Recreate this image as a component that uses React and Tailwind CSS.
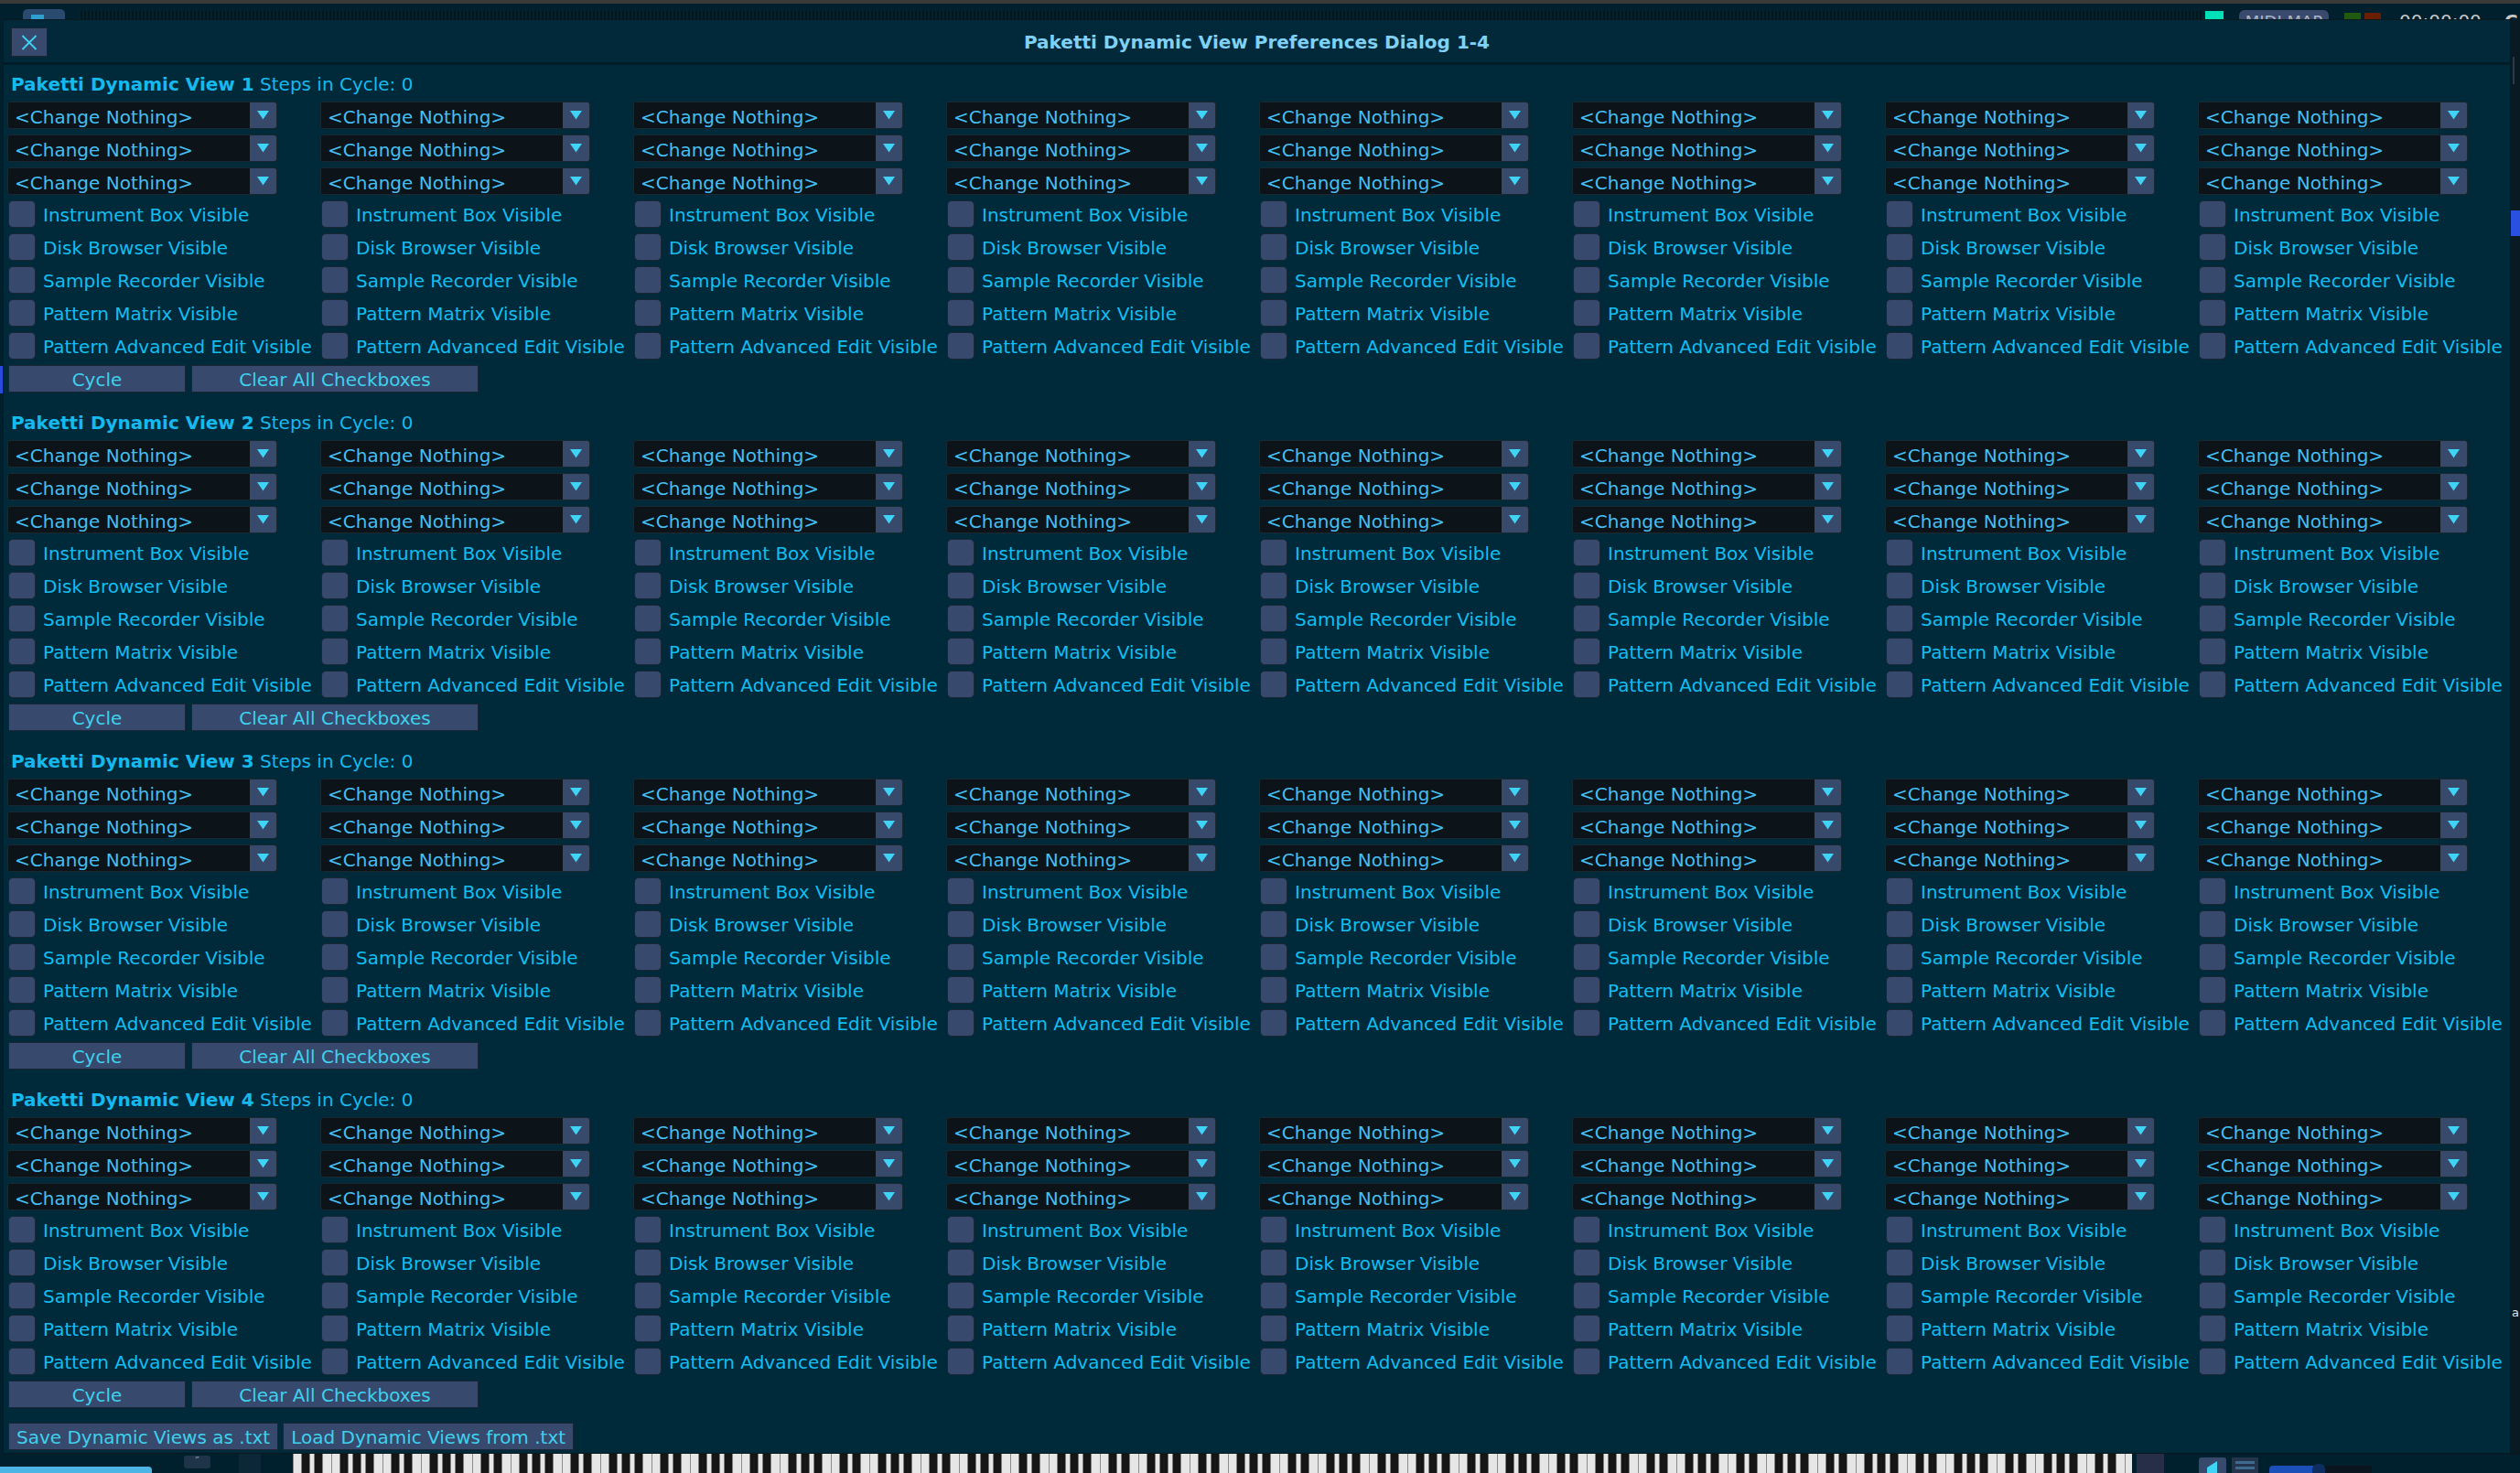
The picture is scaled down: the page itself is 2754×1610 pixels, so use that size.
import React from "react";

const LABELS = [
  "Instrument Box Visible",
  "Disk Browser Visible",
  "Sample Recorder Visible",
  "Pattern Matrix Visible",
  "Pattern Advanced Edit Visible",
];

function Dropdown() {
  return (
    <div className="flex h-[30px] w-[295px] overflow-hidden rounded-[3px] border border-[#1a2830] bg-[#0c1419]">
      <div className="flex-1 whitespace-nowrap pl-[7px] pt-[2px] text-[20px] leading-[28px] text-[#45bff2]">
        &lt;Change Nothing&gt;
      </div>
      <div className="flex w-[29px] items-center justify-center bg-[#384a6c]">
        <svg width="13" height="10" viewBox="0 0 13 10">
          <path d="M0 0H13L6.5 9.5Z" fill="#3fd3f6" />
        </svg>
      </div>
    </div>
  );
}

function CheckRow({ label }) {
  return (
    <div className="flex h-[30px] items-start">
      <div className="ml-[1px] h-[30px] w-[30px] shrink-0 rounded-[5px] border border-[#1b2636] bg-[#37496c]" />
      <span className="ml-[8px] whitespace-nowrap pt-[1px] text-[20px] leading-[30px] text-[#12bef0]">
        {label}
      </span>
    </div>
  );
}

function Btn({ children, className }) {
  return (
    <div
      className={
        "h-[30px] whitespace-nowrap border border-[#1b2636] bg-[#37496c] pt-[1px] text-center text-[20px] leading-[28px] text-[#3dd1ec] " +
        className
      }
    >
      {children}
    </div>
  );
}

function Section({ n }) {
  const cols = [0, 1, 2, 3, 4, 5, 6, 7];
  return (
    <div className="flex flex-col gap-[6px]">
      <div className="h-[30px] whitespace-nowrap pl-[4px] pt-[2px] text-[20px] leading-[30px] text-[#16b9ee]">
        <span className="font-bold">Paketti Dynamic View {n}</span>
        <span> Steps in Cycle: 0</span>
      </div>
      <div className="flex">
        {cols.map((c) => (
          <div key={c} className="flex w-[342px] shrink-0 flex-col gap-[6px]">
            <Dropdown />
            <Dropdown />
            <Dropdown />
            {LABELS.map((l) => (
              <CheckRow key={l} label={l} />
            ))}
          </div>
        ))}
      </div>
      <div className="flex gap-[6px] pl-[1px]">
        <Btn className="w-[194px]">Cycle</Btn>
        <Btn className="w-[314px]">Clear All Checkboxes</Btn>
      </div>
    </div>
  );
}

function Piano() {
  return (
    <svg width="2010" height="21" viewBox="0 0 2010 21">
      <defs>
        <pattern id="oct" width="98" height="21" patternUnits="userSpaceOnUse">
          <rect x="0" y="0" width="98" height="21" fill="#e6e6e6" />
          {[0, 14, 28, 42, 56, 70, 84].map((x) => (
            <rect key={x} x={x} y="0" width="1" height="21" fill="#8a8a8a" />
          ))}
          {[9.5, 23.5, 51.5, 65.5, 79.5].map((x) => (
            <rect key={x} x={x} y="0" width="9" height="21" fill="#161616" />
          ))}
        </pattern>
      </defs>
      <rect x="0" y="0" width="2010" height="21" fill="url(#oct)" />
    </svg>
  );
}

export default function App() {
  return (
    <div className="relative h-[1610px] w-[2754px] overflow-hidden bg-[#01202d] font-['DejaVu_Sans',sans-serif]">
      {/* background application (behind the dialog) */}
      <div className="absolute left-0 top-0 h-[4px] w-full bg-[#3b3a38]" />
      <div className="absolute left-[25px] top-[10px] h-[14px] w-[46px] rounded-t-[5px] bg-[#2b4a70]">
        <div className="ml-[9px] mt-[6px] h-[8px] w-[14px] bg-[#2f9fd0]" />
      </div>
      <div className="absolute left-[86px] top-[12px] h-[10px] w-[2321px] bg-[repeating-linear-gradient(90deg,#04212c_0px,#04212c_2px,#01161f_2px,#01161f_4px)]" />
      <div className="absolute left-[2410px] top-[12px] h-[10px] w-[20px] bg-[#00e0b8]" />
      <div className="absolute left-[2447px] top-[11px] h-[12px] w-[98px] overflow-hidden rounded-t-[6px] bg-[#3a4a6e] pt-[3px] text-center text-[18px] leading-[20px] text-[#aab4c6]">
        MIDI MAP
      </div>
      <div className="absolute left-[2562px] top-[14px] h-[8px] w-[18px] bg-[#1f5a10]" />
      <div className="absolute left-[2584px] top-[14px] h-[8px] w-[18px] bg-[#6a1e00]" />
      <div className="absolute left-[2622px] top-[13px] text-[20px] leading-[20px] text-[#c8c8c8]">
        00:00:00
      </div>
      <div className="absolute left-[2737px] top-[13px] text-[20px] font-bold leading-[20px] text-[#c8c8c8]">
        C
      </div>

      {/* left edge */}
      <div className="absolute left-0 top-[400px] h-[30px] w-[3px] bg-[#2a4be0]" />
      {/* right edge */}
      <div className="absolute left-[2744px] top-[22px] h-[1568px] w-[10px] bg-[#0a1a23]" />
      <div className="absolute left-[2746px] top-[62px] h-[30px] w-[2px] bg-[#2a3a48]" />
      <div className="absolute left-[2744px] top-[230px] h-[28px] w-[10px] bg-[#2a50e0]" />
      <div className="absolute left-[2745px] top-[1428px] text-[13px] leading-[14px] text-[#e0e0e0]">
        a
      </div>

      {/* bottom strip */}
      <div className="absolute left-0 top-[1603px] h-[7px] w-[166px] rounded-tr-[4px] bg-[#4db4e6]" />
      <div className="absolute left-[201px] top-[1591px] flex h-[14px] w-[29px] items-start justify-center rounded-[3px] bg-[#1f3448] text-[12px] leading-[12px] text-[#8aa0b8]">
        ″
      </div>
      <div className="absolute left-[261px] top-[1589px] h-[21px] w-[24px] bg-[#0c2838]" />
      <div className="absolute left-[320px] top-[1589px]">
        <Piano />
      </div>
      <div className="absolute left-[2335px] top-[1589px] h-[21px] w-[30px] bg-[#262e48]" />
      <div className="absolute left-[2403px] top-[1593px] h-[17px] w-[30px] rounded-t-[3px] bg-[#37496c]">
        <svg width="30" height="17" viewBox="0 0 30 17">
          <path d="M9 17V11L20 4V17Z" fill="#3fd3f6" />
        </svg>
      </div>
      <div className="absolute left-[2439px] top-[1593px] flex h-[17px] w-[29px] flex-col gap-[3px] bg-[#24344c] px-[4px] pt-[4px]">
        <div className="h-[3px] bg-[#3e6a90]" />
        <div className="h-[3px] bg-[#3e6a90]" />
      </div>
      <div className="absolute left-[2480px] top-[1602px] h-[8px] w-[60px] rounded-tl-[4px] bg-[#1a50b8]" />
      <div className="absolute left-[2527px] top-[1600px] h-[10px] w-[14px] rounded-t-[6px] bg-[#0e2e60]" />
      <div className="absolute left-[2541px] top-[1602px] h-[8px] w-[51px] bg-[#0a1520]" />

      {/* dialog window */}
      <div className="absolute left-[3px] top-[21px] flex h-[1568px] w-[2741px] flex-col overflow-hidden border border-[#0a1820] bg-[#00293a]">
        <div className="grid h-[46px] grid-cols-[1fr_auto_1fr] bg-[#01293a]">
          <div className="ml-[8px] mt-[8px] flex h-[32px] w-[40px] items-center justify-center border border-[#1a2432] bg-[#37496c]">
            <svg width="18" height="17" viewBox="0 0 18 17">
              <path d="M1.5 1L16.5 16M16.5 1L1.5 16" stroke="#3fd3f6" strokeWidth="1.8" />
            </svg>
          </div>
          <div className="mt-[2px] self-center whitespace-nowrap text-[20px] font-bold leading-[24px] text-[#7fd2f5]">
            Paketti Dynamic View Preferences Dialog 1-4
          </div>
          <div />
        </div>
        <div className="h-[3px] bg-[#001c28]" />
        <div className="flex flex-col gap-[16px] pl-[4px] pt-[4px]">
          <Section n={1} />
          <Section n={2} />
          <Section n={3} />
          <Section n={4} />
          <div className="flex gap-[5px] pl-[1px]">
            <Btn className="px-[8px]">Save Dynamic Views as .txt</Btn>
            <Btn className="px-[8px]">Load Dynamic Views from .txt</Btn>
          </div>
        </div>
      </div>
    </div>
  );
}
